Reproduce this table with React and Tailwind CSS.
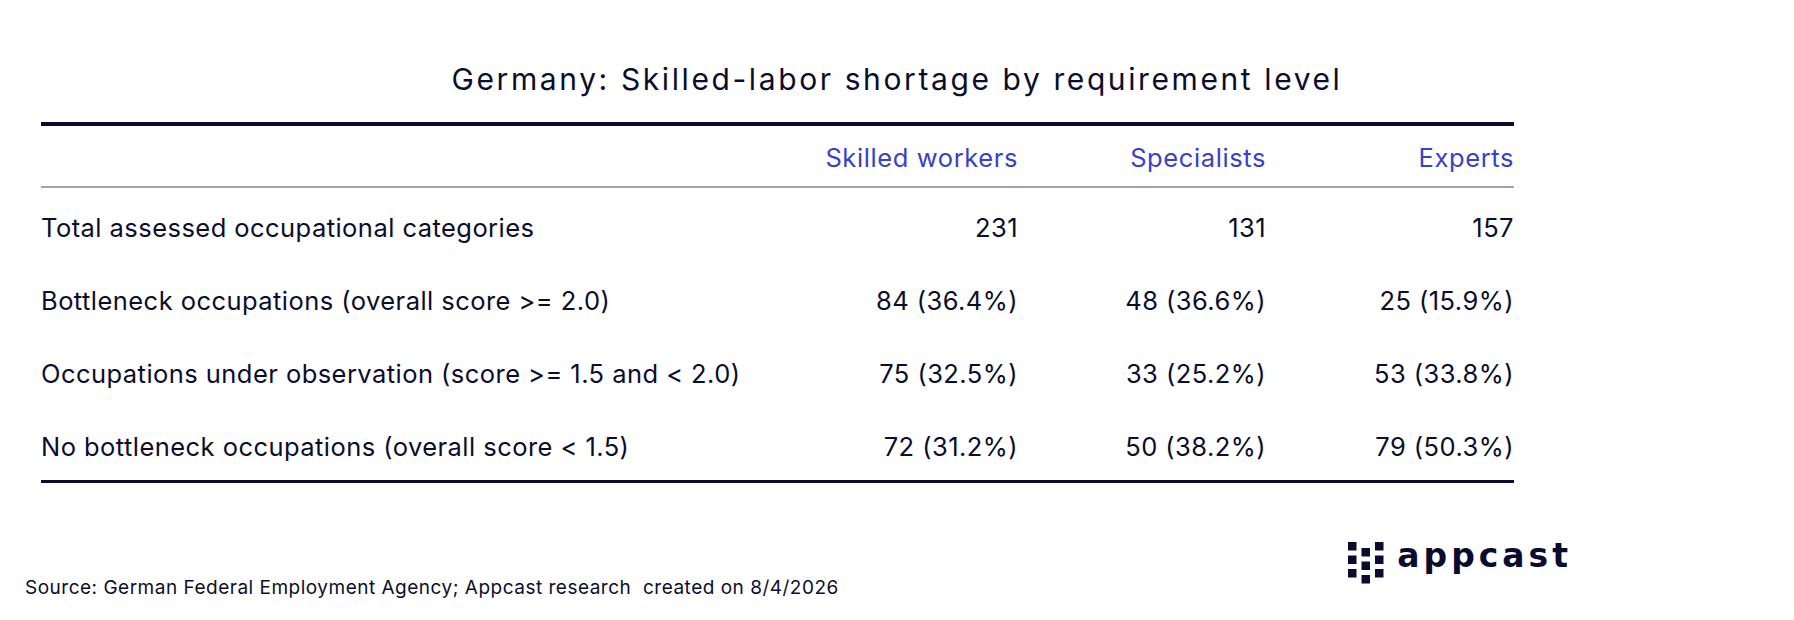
import React from 'react';

const rows = [
  ['Total assessed occupational categories', '231', '131', '157'],
  ['Bottleneck occupations (overall score >= 2.0)', '84 (36.4%)', '48 (36.6%)', '25 (15.9%)'],
  ['Occupations under observation (score >= 1.5 and < 2.0)', '75 (32.5%)', '33 (25.2%)', '53 (33.8%)'],
  ['No bottleneck occupations (overall score < 1.5)', '72 (31.2%)', '50 (38.2%)', '79 (50.3%)'],
];

const headers = ['Skilled workers', 'Specialists', 'Experts'];

const AppcastMark = () => (
  <svg width="36" height="42" viewBox="0 0 36 42" fill="#0a0b2e">
    <rect x="0" y="0" width="8.5" height="8.5" />
    <rect x="0" y="13.5" width="8.5" height="8.5" />
    <rect x="0" y="27" width="8.5" height="8.5" />
    <rect x="13.5" y="6" width="8.5" height="8.5" />
    <rect x="13.5" y="19.5" width="8.5" height="8.5" />
    <rect x="13.5" y="33" width="8.5" height="8.5" />
    <rect x="27" y="0" width="8.5" height="8.5" />
    <rect x="27" y="13.5" width="8.5" height="8.5" />
    <rect x="27" y="27" width="8.5" height="8.5" />
  </svg>
);

const App = () => {
  return (
    <div className="w-[1794px] h-[620px] bg-white text-[#0c0d2c] font-['Inter',sans-serif] overflow-hidden">
      <h1 className="pt-[63px] text-center text-[30px] leading-[32px] font-normal tracking-[2.6px]">
        Germany: Skilled-labor shortage by requirement level
      </h1>

      <div className="ml-[41px] w-[1473px] mt-[27px]">
        <div className="h-[4px] bg-[#0a0b2e]" />
        <div className="grid grid-cols-[1fr_248px_248px_248px] h-[60px] items-end pb-[13px] text-[25.5px] leading-[30px] text-[#3a40c8] tracking-[0.6px]">
          <div />
          {headers.map((h) => (
            <div key={h} className="text-right">{h}</div>
          ))}
        </div>
        <div className="h-[2px] bg-[#9aa3b8]" />
        {rows.map((r) => (
          <div key={r[0]} className="grid grid-cols-[1fr_248px_248px_248px] h-[73px] pt-[6px] items-center text-[25.5px] leading-[30px] tracking-[0.45px]">
            <div>{r[0]}</div>
            <div className="text-right">{r[1]}</div>
            <div className="text-right">{r[2]}</div>
            <div className="text-right">{r[3]}</div>
          </div>
        ))}
        <div className="h-[3px] bg-[#0a0b2e]" />
      </div>

      <div className="flex items-start mt-[59px]">
        <div className="ml-[25px] mt-[36px] text-[19px] leading-[20px] tracking-[0.5px]">
          Source: German Federal Employment Agency; Appcast research&nbsp; created on 8/4/2026
        </div>
        <div className="ml-auto mr-[222px] flex items-start gap-[13px]">
          <AppcastMark />
          <span className="-mt-[2px] font-['DejaVu_Sans',sans-serif] font-bold text-[33px] leading-[32px] tracking-[4px] text-[#0a0b2e]">
            appcast
          </span>
        </div>
      </div>
    </div>
  );
};

export default App;
